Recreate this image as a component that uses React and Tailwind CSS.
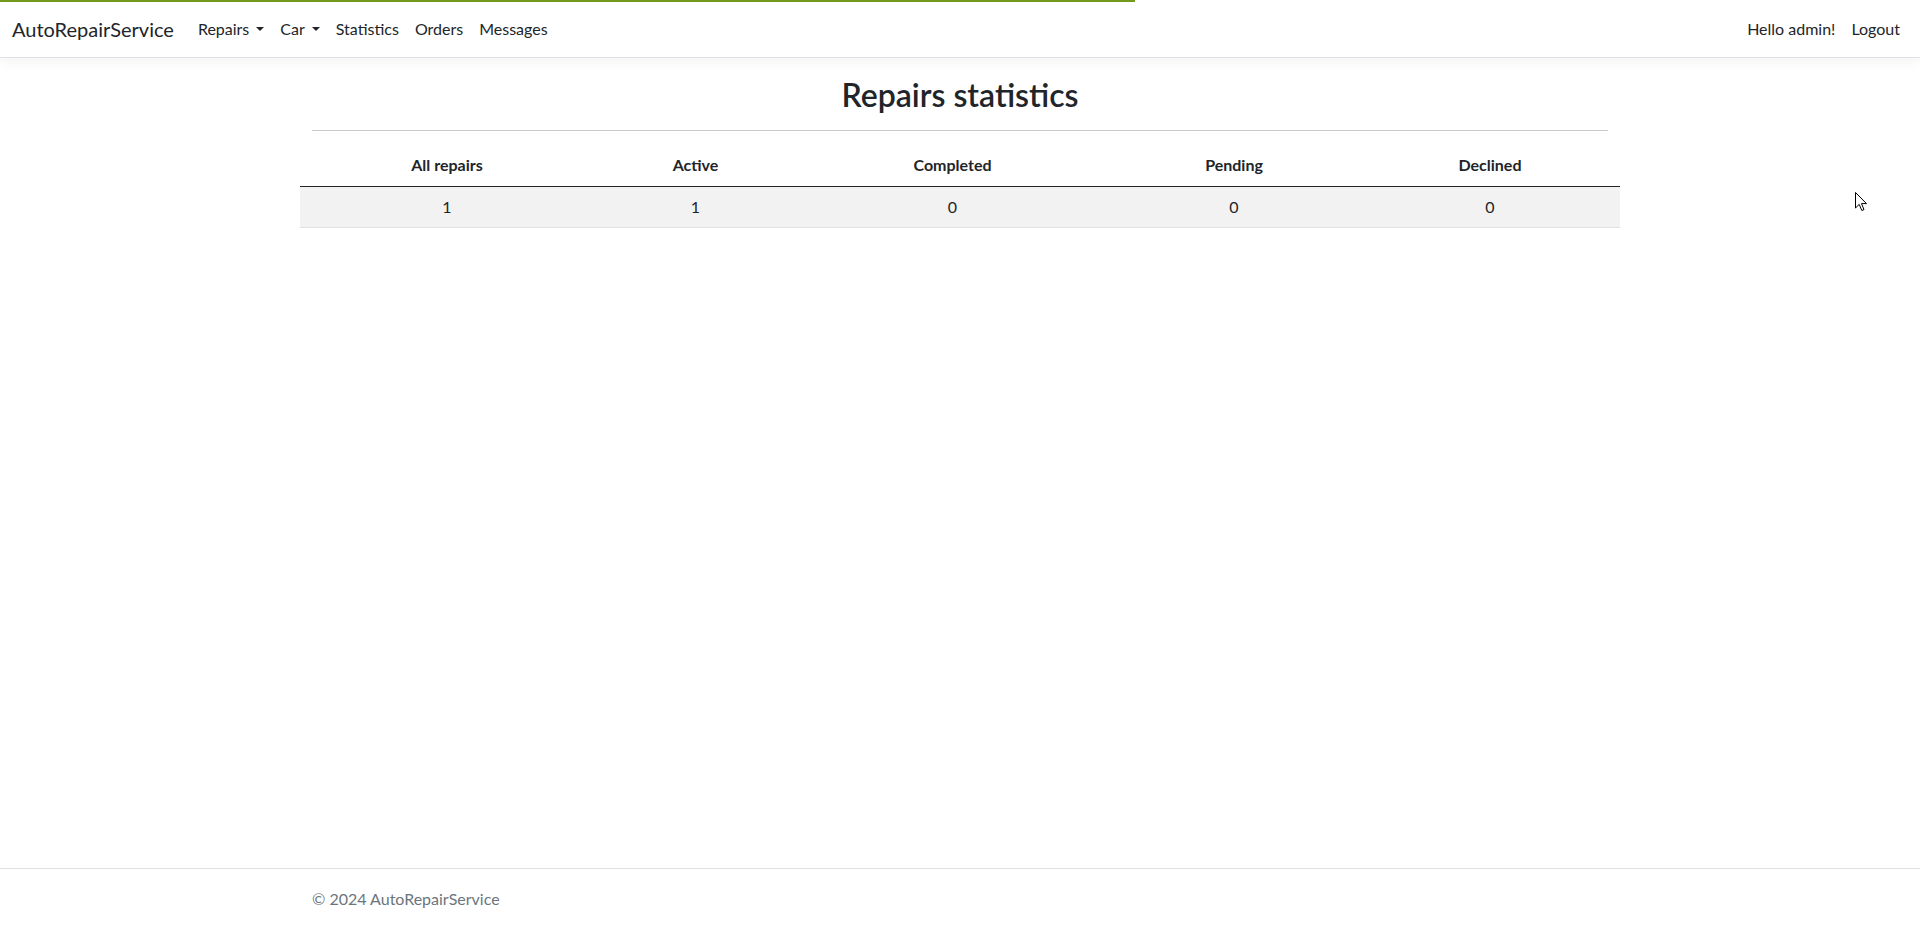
import React from 'react';

const font = { fontFamily: '"Lato", "Noto Sans", sans-serif' };

const columns = [
  { label: 'All repairs', value: 1, width: 'w-[294px]' },
  { label: 'Active', value: 1, width: 'w-[203px]' },
  { label: 'Completed', value: 0, width: 'w-[311px]' },
  { label: 'Pending', value: 0, width: 'w-[252px]' },
  { label: 'Declined', value: 0, width: 'w-[260px]' }
];

const Caret = () => (
  <span className="inline-block ml-[7px] align-[4px] w-0 h-0 border-t-[4px] border-t-[#212529] border-x-[4px] border-x-transparent" />
);

const Navbar = () => (
  <header className="relative z-10 bg-white border-b border-[#dee2e6] shadow-[0_4px_12px_rgba(0,0,0,0.05)]">
    {/* loading bar */}
    <div className="absolute top-0 left-0 h-[2px] w-[1135px] bg-[#72991b]" />
    <nav className="h-[57px] px-3 flex items-center justify-between">
      <div className="flex items-center">
        <a className="text-[20px] leading-[30px] py-[5px] mr-4 text-[#212529]">AutoRepairService</a>
        <ul className="flex items-center text-[16px] leading-6 text-[#212529]">
          <li className="px-2 py-2">Repairs<Caret /></li>
          <li className="px-2 py-2">Car<Caret /></li>
          <li className="px-2 py-2">Statistics</li>
          <li className="px-2 py-2">Orders</li>
          <li className="px-2 py-2">Messages</li>
        </ul>
      </div>
      <ul className="flex items-center text-[16px] leading-6 text-[#212529]">
        <li className="px-2 py-2">Hello admin!</li>
        <li className="px-2 py-2">Logout</li>
      </ul>
    </nav>
  </header>
);

const StatsTable = () => (
  <table className="w-[1320px] mx-auto text-[16px] leading-6 text-[#212529] border-collapse">
    <thead>
      <tr>
        {columns.map((c) => (
          <th key={c.label} className={`${c.width} h-[41px] px-2 py-2 text-center font-bold border-b border-[#212529]`}>
            {c.label}
          </th>
        ))}
      </tr>
    </thead>
    <tbody>
      <tr className="bg-[#f2f2f2]">
        {columns.map((c) => (
          <td key={c.label} className="h-[41px] px-2 py-2 text-center border-b border-[#dee2e6]">
            {c.value}
          </td>
        ))}
      </tr>
    </tbody>
  </table>
);

const Cursor = () => (
  <svg className="absolute left-[1855px] top-[192px]" width="13" height="20" viewBox="0 0 13 20">
    <path d="M0.5 0.5 L0.5 16 L4.2 12.4 L6.8 18.5 L9 17.6 L6.5 11.6 L11.5 11.6 Z" fill="#fff" stroke="#000" strokeWidth="1" strokeLinejoin="round" />
  </svg>
);

export default function App() {
  return (
    <div className="relative min-h-screen flex flex-col bg-white" style={font}>
      <Navbar />
      <main className="pt-[18px]">
        <div className="max-w-[1320px] mx-auto px-3">
          <h2 className="text-center text-[32px] leading-[38px] font-semibold text-[#212529]">Repairs statistics</h2>
          <hr className="mt-4 mb-[14px] border-0 border-t border-[#c8c9ca]" />
        </div>
        <StatsTable />
      </main>
      <footer className="mt-auto border-t border-[#dee2e6]">
        <div className="max-w-[1320px] mx-auto px-3 text-[16px] leading-[60px] text-[#6c757d] whitespace-nowrap">
          © 2024 AutoRepairService
        </div>
      </footer>
      <Cursor />
    </div>
  );
}
